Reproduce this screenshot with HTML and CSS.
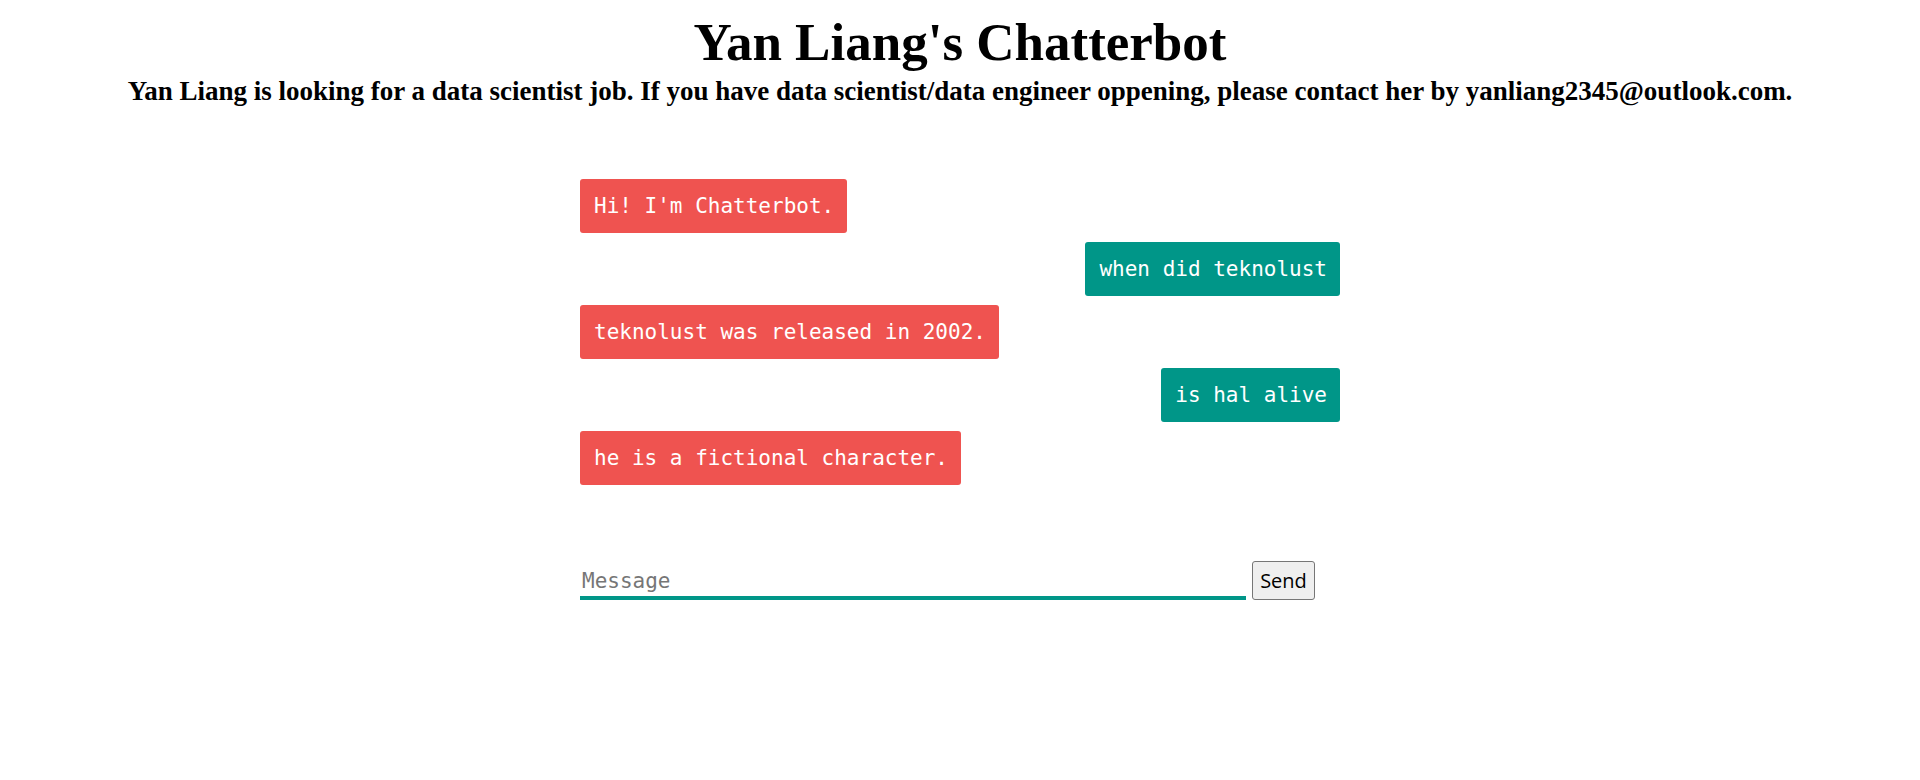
FILE: index.html
```html
<!DOCTYPE html>
<html lang="en">
<head>
<meta charset="utf-8">
<title>Yan Liang's Chatterbot</title>
<link rel="stylesheet" href="styles.css">
</head>
<body>
<header class="header">
  <h1 class="title">Yan Liang's Chatterbot</h1>
  <h3 class="subtitle">Yan Liang is looking for a data scientist job. If you have data scientist/data engineer oppening, please contact her by yanliang2345@outlook.com.</h3>
</header>
<main class="chat">
  <div class="msg bot">Hi! I'm Chatterbot.</div>
  <div class="msg user">when did teknolust</div>
  <div class="msg bot">teknolust was released in 2002.</div>
  <div class="msg user">is hal alive</div>
  <div class="msg bot">he is a fictional character.</div>
</main>
<form class="composer">
  <input class="message-input" type="text" placeholder="Message">
  <button class="send" type="button">Send</button>
</form>
</body>
</html>
```
FILE: styles.css
```css
html, body {
  margin: 0;
  padding: 0;
  background: #ffffff;
}

body {
  font-family: "Liberation Serif", "Times New Roman", serif;
  color: #000;
}

.header {
  text-align: center;
  padding-top: 13px;
}

.title {
  margin: 0;
  font-size: 53px;
  line-height: 58px;
  font-weight: bold;
}

.subtitle {
  margin: 0;
  padding-top: 5px;
  font-size: 27px;
  line-height: 30px;
  font-weight: bold;
}

.chat {
  width: 760px;
  margin: 73px auto 0;
  display: flex;
  flex-direction: column;
  gap: 9px;
}

.msg {
  font-family: "DejaVu Sans Mono", "Liberation Mono", monospace;
  font-size: 21px;
  line-height: 26px;
  color: #ffffff;
  padding: 14px 13px 14px 14px;
  border-radius: 3px;
  white-space: pre;
}

.bot {
  align-self: flex-start;
  background: #ef5350;
}

.user {
  align-self: flex-end;
  background: #009688;
}

.composer {
  width: 760px;
  margin: 76px auto 0;
  display: flex;
  align-items: flex-end;
  gap: 6px;
}

.message-input {
  width: 666px;
  box-sizing: border-box;
  height: 34px;
  border: none;
  border-bottom: 4px solid #009688;
  outline: none;
  padding: 0 2px;
  font-family: "DejaVu Sans Mono", "Liberation Mono", monospace;
  font-size: 21px;
  background: transparent;
}

.message-input::placeholder {
  color: #767676;
}

.send {
  height: 39px;
  width: 63px;
  box-sizing: border-box;
  padding: 0;
  border: 1px solid #767676;
  border-radius: 3px;
  background: #efefef;
  font-family: "Open Sans", "Noto Sans", sans-serif;
  font-size: 20px;
  color: #000;
}
```
